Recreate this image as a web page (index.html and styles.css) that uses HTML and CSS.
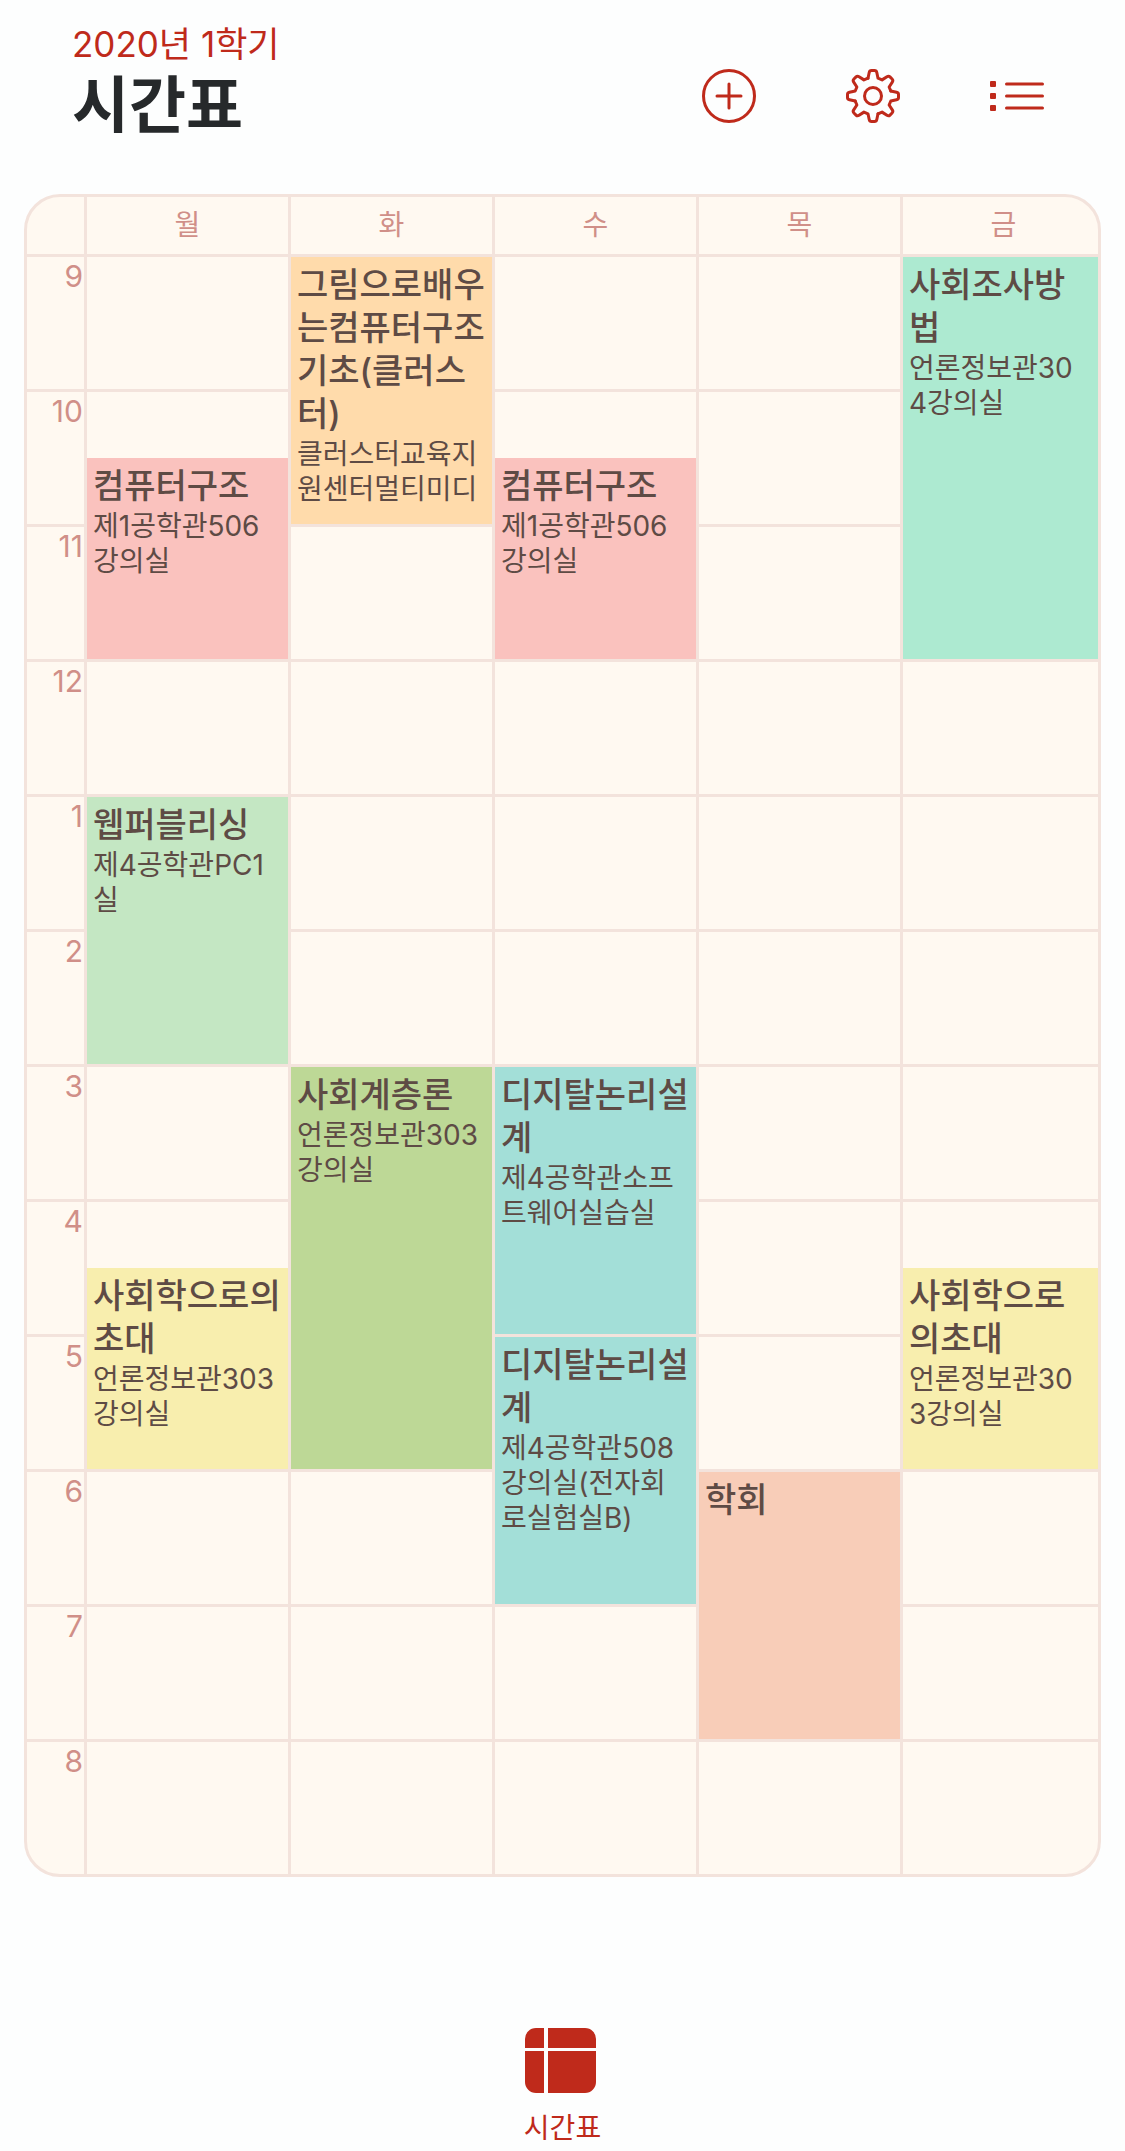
FILE: index.html
```html
<!DOCTYPE html>
<html lang="ko">
<head>
<meta charset="utf-8">
<meta name="viewport" content="width=device-width, initial-scale=1">
<title>시간표</title>
<link rel="stylesheet" href="styles.css">
</head>
<body>
<header class="topbar">
  <div class="heading">
    <p class="semester">2020년 1학기</p>
    <h1 class="page-title">시간표</h1>
  </div>
  <div class="actions">
    <button class="icon-button" type="button" aria-label="수업 추가">
      <svg class="icon" viewBox="-27 -27 54 54" aria-hidden="true">
        <circle r="25.5"/>
        <path d="M-12 0H12M0-12V12"/>
      </svg>
    </button>
    <button class="icon-button" type="button" aria-label="설정">
      <svg class="icon" viewBox="-27 -27 54 54" aria-hidden="true">
        <circle r="8.5"/>
        <path id="teeth" d="M-5-17.8L-3.8-23.5Q-3.4-25.5-1.5-25.5L1.5-25.5Q3.4-25.5 3.8-23.5L5-17.8L9.05-16.12L13.93-19.3Q15.63-20.44 16.97-19.09L19.09-16.97Q20.44-15.63 19.3-13.93L16.12-9.05L17.8-5"/>
        <use href="#teeth" transform="rotate(90)"/>
        <use href="#teeth" transform="rotate(180)"/>
        <use href="#teeth" transform="rotate(270)"/>
      </svg>
    </button>
    <button class="icon-button" type="button" aria-label="시간표 목록">
      <svg class="icon" viewBox="-27 -27 54 54" aria-hidden="true">
        <path d="M-10.5-12H25.5M-10.5 0H25.5M-10.5 12H25.5"/>
        <g class="solid">
          <rect x="-27" y="-15" width="6" height="6" rx="1"/>
          <rect x="-27" y="-3" width="6" height="6" rx="1"/>
          <rect x="-27" y="9" width="6" height="6" rx="1"/>
        </g>
      </svg>
    </button>
  </div>
</header>

<main class="board">
  <table class="timetable">
    <colgroup>
      <col class="col-time"><col><col><col><col><col>
    </colgroup>
    <thead>
      <tr class="days"><td></td><th scope="col">월</th><th scope="col">화</th><th scope="col">수</th><th scope="col">목</th><th scope="col">금</th></tr>
    </thead>
    <tbody>
      <tr class="on-hour">
        <th scope="row" rowspan="2">9</th>
        <td rowspan="2"></td>
        <td rowspan="4" class="event orange"><strong>그림으로배우는컴퓨터구조기초(클러스터)</strong><p>클러스터교육지원센터멀티미디</p></td>
        <td rowspan="2"></td>
        <td rowspan="2"></td>
        <td rowspan="6" class="event friday mint"><strong>사회조사방법</strong><p>언론정보관304강의실</p></td>
      </tr>
      <tr class="half-past"></tr>
      <tr class="on-hour">
        <th scope="row" rowspan="2">10</th>
        <td class="open"></td>
        <td class="open"></td>
        <td rowspan="2"></td>
      </tr>
      <tr class="half-past">
        <td rowspan="3" class="event pink"><strong>컴퓨터구조</strong><p>제1공학관506강의실</p></td>
        <td rowspan="3" class="event pink"><strong>컴퓨터구조</strong><p>제1공학관506강의실</p></td>
      </tr>
      <tr class="on-hour">
        <th scope="row" rowspan="2">11</th>
        <td rowspan="2"></td>
        <td rowspan="2"></td>
      </tr>
      <tr class="half-past"></tr>
      <tr class="on-hour">
        <th scope="row" rowspan="2">12</th>
        <td rowspan="2"></td><td rowspan="2"></td><td rowspan="2"></td><td rowspan="2"></td><td rowspan="2"></td>
      </tr>
      <tr class="half-past"></tr>
      <tr class="on-hour">
        <th scope="row" rowspan="2">1</th>
        <td rowspan="4" class="event green"><strong>웹퍼블리싱</strong><p>제4공학관PC1실</p></td>
        <td rowspan="2"></td><td rowspan="2"></td><td rowspan="2"></td><td rowspan="2"></td>
      </tr>
      <tr class="half-past"></tr>
      <tr class="on-hour">
        <th scope="row" rowspan="2">2</th>
        <td rowspan="2"></td><td rowspan="2"></td><td rowspan="2"></td><td rowspan="2"></td>
      </tr>
      <tr class="half-past"></tr>
      <tr class="on-hour">
        <th scope="row" rowspan="2">3</th>
        <td rowspan="2"></td>
        <td rowspan="6" class="event olive"><strong>사회계층론</strong><p>언론정보관303강의실</p></td>
        <td rowspan="4" class="event teal"><strong>디지탈논리설계</strong><p>제4공학관소프트웨어실습실</p></td>
        <td rowspan="2"></td>
        <td rowspan="2"></td>
      </tr>
      <tr class="half-past"></tr>
      <tr class="on-hour">
        <th scope="row" rowspan="2">4</th>
        <td class="open"></td>
        <td rowspan="2"></td>
        <td class="open"></td>
      </tr>
      <tr class="half-past">
        <td rowspan="3" class="event yellow"><strong>사회학으로의초대</strong><p>언론정보관303강의실</p></td>
        <td rowspan="3" class="event friday yellow"><strong>사회학으로의초대</strong><p>언론정보관303강의실</p></td>
      </tr>
      <tr class="on-hour">
        <th scope="row" rowspan="2">5</th>
        <td rowspan="4" class="event teal"><strong>디지탈논리설계</strong><p>제4공학관508강의실(전자회로실험실B)</p></td>
        <td rowspan="2"></td>
      </tr>
      <tr class="half-past"></tr>
      <tr class="on-hour">
        <th scope="row" rowspan="2">6</th>
        <td rowspan="2"></td>
        <td rowspan="2"></td>
        <td rowspan="4" class="event peach"><strong>학회</strong></td>
        <td rowspan="2"></td>
      </tr>
      <tr class="half-past"></tr>
      <tr class="on-hour">
        <th scope="row" rowspan="2">7</th>
        <td rowspan="2"></td><td rowspan="2"></td><td rowspan="2"></td><td rowspan="2"></td>
      </tr>
      <tr class="half-past"></tr>
      <tr class="final">
        <th scope="row">8</th>
        <td></td><td></td><td></td><td></td><td></td>
      </tr>
    </tbody>
  </table>
</main>

<nav class="tabbar" aria-label="메뉴">
  <a class="tab" href="#" aria-current="page">
    <svg class="tab-icon" viewBox="0 0 76 66" aria-hidden="true">
      <path d="M11 0H19V20H0V11A11 11 0 0 1 11 0ZM23 0H60A11 11 0 0 1 71 11V20H23ZM0 23H19V65H11A11 11 0 0 1 0 54ZM23 23H71V54A11 11 0 0 1 60 65H23Z"/>
    </svg>
    <span>시간표</span>
  </a>
</nav>
</body>
</html>
```
FILE: styles.css
```css
:root {
  --red: #bf2a1b;
  --line: #f3e3dc;
  --paper: #fff9f1;
  --label: #d08f88;
  --ink: #5e4b45;
}

* {
  box-sizing: border-box;
}

body {
  margin: 0;
  background: #fdfefe;
  color: var(--ink);
  font-family: Inter, "Noto Sans CJK KR", sans-serif;
  font-size: 28px;
}

p,
h1 {
  margin: 0;
}

.topbar {
  display: flex;
  justify-content: space-between;
  align-items: flex-start;
  padding: 22px 81px 48px 72px;
}

.semester {
  color: var(--red);
  font-size: 35px;
  line-height: 44px;
}

.page-title {
  color: #26292b;
  font-size: 62px;
  font-weight: 700;
  line-height: 80px;
}

.actions {
  display: flex;
  gap: 90px;
  padding-top: 47px;
}

.icon-button {
  display: block;
  padding: 0;
  border: 0;
  background: none;
  color: var(--red);
}

.icon {
  display: block;
  width: 54px;
  height: 54px;
  fill: none;
  stroke: currentColor;
  stroke-width: 3;
  stroke-linecap: round;
  stroke-linejoin: round;
}

.solid {
  fill: currentColor;
  stroke: none;
}

.board {
  margin: 0 24px;
  overflow: hidden;
  border: 3px solid var(--line);
  border-radius: 36px;
  background: var(--paper);
}

/* Slightly wider than the board, which clips the last column. */
.timetable {
  width: calc(100% + 9px);
  table-layout: fixed;
  border-collapse: separate;
  border-spacing: 0;
}

.col-time {
  width: 60px;
}

.timetable th,
.timetable td {
  padding: 0;
  border: solid var(--line);
  border-width: 0 3px 3px 0;
  vertical-align: top;
}

.timetable th {
  color: var(--label);
  font-weight: 400;
}

.days {
  height: 60px;
}

.timetable .days th {
  padding-bottom: 2px;
  vertical-align: middle;
  line-height: 36px;
}

.on-hour {
  height: 66px;
}

.half-past {
  height: 69px;
}

.final {
  height: 132px;
}

.timetable th[scope="row"] {
  padding-right: 1px;
  text-align: right;
  font-size: 30px;
  line-height: 38px;
}

.timetable .open,
.timetable .final > * {
  border-bottom-width: 0;
}

.timetable .event {
  padding: 6px 4px 0 6px;
  word-break: break-all;
}

.timetable .friday {
  padding-right: 12px;
}

.event strong {
  display: block;
  font-size: 34px;
  font-weight: 500;
  line-height: 43px;
}

.event p {
  padding: 2px 6px 0 0;
  line-height: 35px;
}

.orange { background: #ffdbab; }
.mint { background: #adead1; }
.pink { background: #fac2be; }
.green { background: #c4e7c3; }
.olive { background: #bdd896; }
.teal { background: #a3dfd8; }
.yellow { background: #f8eeae; }
.peach { background: #f8cdb8; }

.tabbar {
  display: flex;
  justify-content: center;
  padding: 151px 0 4px;
}

.tab {
  display: flex;
  flex-direction: column;
  align-items: center;
  gap: 16px;
  color: var(--red);
  line-height: 36px;
  text-decoration: none;
}

.tab-icon {
  width: 76px;
  height: 66px;
  fill: currentColor;
}
```
